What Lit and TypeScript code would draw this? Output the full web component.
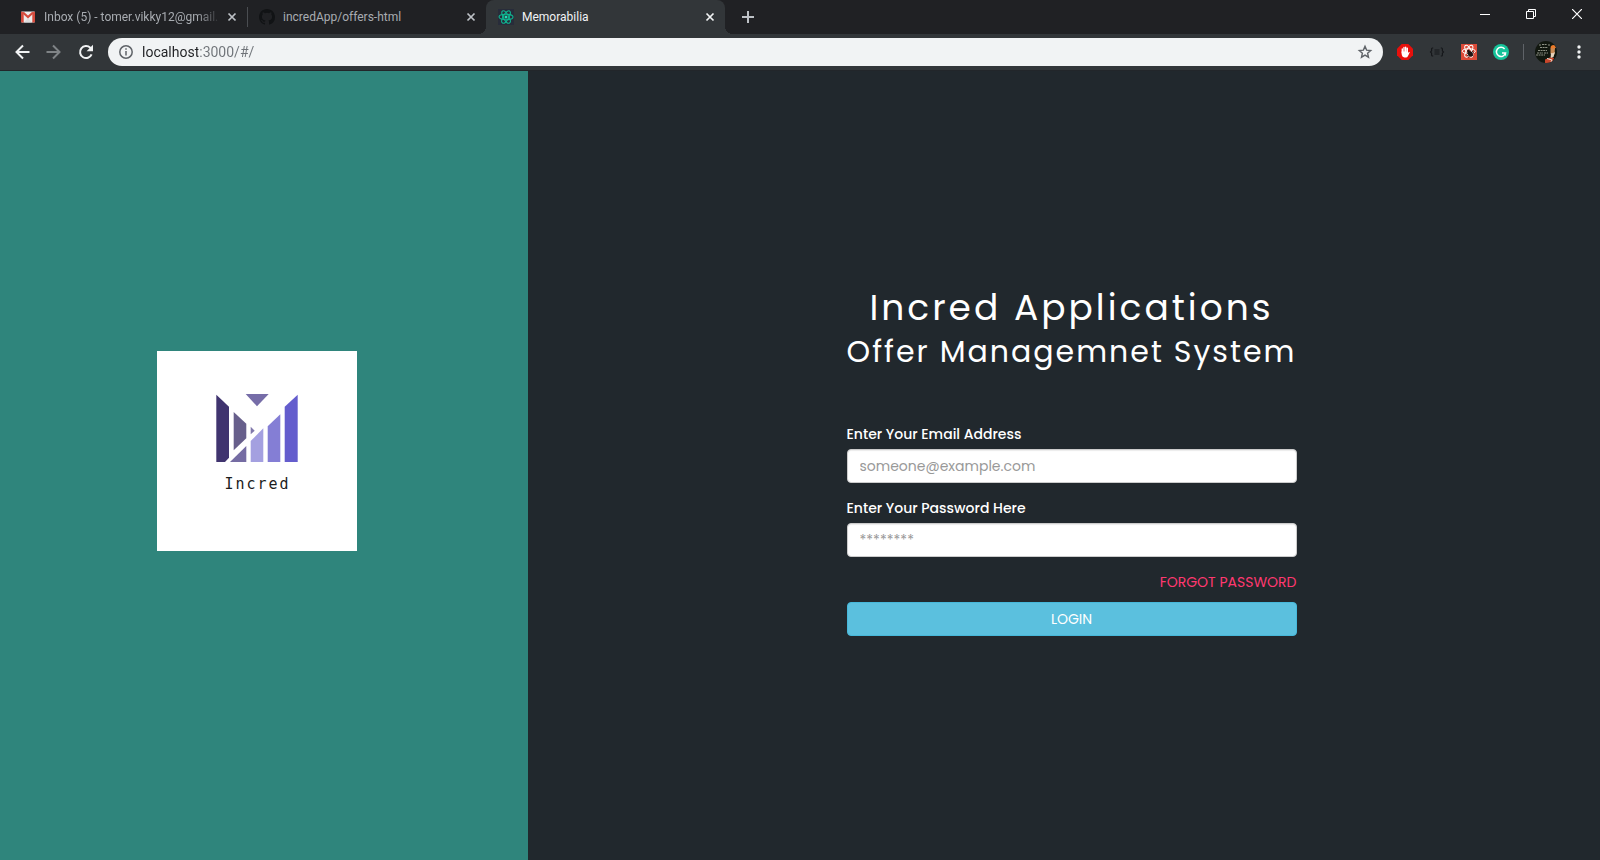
import { LitElement, html, css, svg } from "lit";
import { customElement } from "lit/decorators.js";
import { classMap } from "lit/directives/class-map.js";

const gmailIcon = html`<svg width="16" height="16" viewBox="0 0 16 16" aria-hidden="true">
  <rect x="1" y="2.500" width="14" height="11" rx="1" fill="#eee"/>
  <path d="M4 13.500 8 9l4 4.500z" fill="#ddd"/>
  <path d="M3 3.500 8 8l5-4.500" fill="none" stroke="#d54b3d" stroke-width="2.200"/>
  <path d="M1 3.500a1 1 0 0 1 1-1l1.700 1.500v9.500H2a1 1 0 0 1-1-1zM15 3.500a1 1 0 0 0-1-1L12.300 4v9.500H14a1 1 0 0 0 1-1z" fill="#d54b3d"/>
</svg>`;

const githubIcon = html`<svg width="16" height="16" viewBox="0 0 16 16" aria-hidden="true">
  <path fill="#111315" d="M8 0C3.580 0 0 3.580 0 8c0 3.540 2.290 6.530 5.470 7.590.4.070.55-.17.55-.38 0-.19-.01-.82-.01-1.490-2.010.37-2.530-.49-2.690-.94-.09-.23-.48-.94-.82-1.130-.28-.15-.68-.52-.01-.53.63-.01 1.080.58 1.230.82.72 1.210 1.870.87 2.330.66.07-.52.28-.87.51-1.070-1.780-.2-3.640-.89-3.640-3.950 0-.87.31-1.590.82-2.150-.08-.2-.36-1.020.08-2.120 0 0 .67-.21 2.200.82a7.600 7.600 0 0 1 4 0c1.530-1.040 2.200-.82 2.200-.82.44 1.100.16 1.920.08 2.120.51.56.82 1.270.82 2.150 0 3.070-1.870 3.750-3.650 3.950.29.25.54.73.54 1.480 0 1.070-.01 1.930-.01 2.200 0 .21.15.46.55.38A8.010 8.010 0 0 0 16 8c0-4.420-3.580-8-8-8z"/>
</svg>`;

const reactIcon = html`<svg width="16" height="16" viewBox="0 0 16 16" aria-hidden="true">
  <rect width="16" height="16" fill="#282c3a"/>
  <g fill="none" stroke="#0fb590" stroke-width="1.100">
    <ellipse cx="8" cy="8" rx="7" ry="2.700"/>
    <ellipse cx="8" cy="8" rx="7" ry="2.700" transform="rotate(60 8 8)"/>
    <ellipse cx="8" cy="8" rx="7" ry="2.700" transform="rotate(120 8 8)"/>
  </g>
  <circle cx="8" cy="8" r="1.500" fill="#1fe0b4"/>
</svg>`;

const line = (d: string, size: number, width = 2) => html`<svg
  width=${size} height=${size} viewBox="0 0 ${size} ${size}" aria-hidden="true">
  ${svg`<path d=${d} fill="none" stroke="currentColor" stroke-width=${width}/>`}
</svg>`;

const closeIcon = line("M3.500 3.500l7 7M10.500 3.500l-7 7", 14, 1.7);
const plusIcon = line("M7 1v12M1 7h12", 14, 2);
const backIcon = line("M15.500 8H2.500M9 1.500 2.500 8 9 14.500", 16, 2);
const forwardIcon = line("M.500 8h13M7 1.500 13.500 8 7 14.500", 16, 2);

const reloadIcon = html`<svg width="16" height="16" viewBox="0 0 16 16" aria-hidden="true">
  <path d="M13.600 10.400A6 6 0 1 1 12.300 3.800L14 5.500" fill="none" stroke="currentColor" stroke-width="2"/>
  <path d="M15 .8v6.400H8.600z" fill="currentColor"/>
</svg>`;

const infoIcon = html`<svg width="14" height="14" viewBox="0 0 14 14" aria-hidden="true">
  <circle cx="7" cy="7" r="6.200" fill="none" stroke="#5f6368" stroke-width="1.500"/>
  <path d="M7 6v4.500M7 3.300v1.500" stroke="#5f6368" stroke-width="1.500"/>
</svg>`;

const starIcon = html`<svg width="16" height="16" viewBox="0 0 16 16" aria-hidden="true">
  <path d="M8 2.300l1.600 3.800 4.100.4-3.100 2.700.9 4L8 11.100l-3.500 2.100.9-4-3.100-2.700 4.100-.4z" fill="none" stroke="#5f6368" stroke-width="1.400"/>
</svg>`;

const blockIcon = html`<svg width="16" height="16" viewBox="0 0 16 16" aria-hidden="true">
  <path d="M4.700 0h6.600L16 4.700v6.600L11.300 16H4.700L0 11.300V4.700z" fill="#e8100c"/>
  <path d="M5.300 5v4M7 3.500V9M8.700 3.200V9M10.300 4.200v5" stroke="#fff" stroke-width="1.400" stroke-linecap="round"/>
  <path d="M4.600 7.500H11V9l1-1.300.8.600-1.800 3.700q-.7 1.500-2 1.500H7.400Q5.300 13.300 4.800 11z" fill="#fff"/>
</svg>`;

const jsonIcon = html`<svg width="16" height="16" viewBox="0 0 16 16" aria-hidden="true">
  <path d="M4.200 4H3.400Q2.600 4 2.600 5v1.800L1.500 8l1.100 1.200V11q0 1 .8 1h.8M11.800 4h.8q.8 0 .8 1v1.800L14.500 8l-1.100 1.200V11q0 1-.8 1h-.8M5.500 6h5M5.500 8h5M5.500 10h5" fill="none" stroke="#15171a" stroke-width="1.200"/>
</svg>`;

const reactDevIcon = html`<svg width="16" height="16" viewBox="0 0 16 16" aria-hidden="true">
  <rect width="16" height="16" fill="#dc4a38"/>
  <g fill="none" stroke="#fff" stroke-width="1">
    <ellipse cx="7.800" cy="7.200" rx="6.600" ry="2.500"/>
    <ellipse cx="7.800" cy="7.200" rx="6.600" ry="2.500" transform="rotate(60 7.800 7.200)"/>
    <ellipse cx="7.800" cy="7.200" rx="6.600" ry="2.500" transform="rotate(120 7.800 7.200)"/>
  </g>
  <ellipse cx="9.300" cy="9.800" rx="2.300" ry="3" transform="rotate(-35 9.300 9.800)" fill="#1d1414"/>
  <path d="M5.500 9l7 3M7.500 13.500l4.500-7M6 12l7-3.500" stroke="#1d1414" stroke-width=".8"/>
  <circle cx="7.400" cy="7" r="1.300" fill="#1d1414"/>
</svg>`;

const grammarIcon = html`<svg width="16" height="16" viewBox="0 0 16 16" aria-hidden="true">
  <circle cx="8" cy="8" r="8" fill="#15c39a"/>
  <path d="M11.600 5A4.600 4.600 0 1 0 12.500 9H9" fill="none" stroke="#fff" stroke-width="1.500"/>
  <path d="M12.500 9v2.600" stroke="#fff" stroke-width="1.200"/>
</svg>`;

const avatarIcon = html`<svg width="22" height="22" viewBox="0 0 22 22" aria-hidden="true">
  <defs><clipPath id="face"><circle cx="11" cy="11" r="11"/></clipPath></defs>
  <g clip-path="url(#face)">
    <rect width="22" height="22" fill="#11170f"/>
    <path d="M4 4h2M7 3.500h5M13 4h2M5 6.500h8M3 9.500h9M2 12h6M9 12h4M1 14h9" stroke="#9c9f92" stroke-width=".9" stroke-dasharray="2 .6"/>
    <path d="M15.500 7.500q.5-2.500 3-2.500l1.500 2-.5 6-2.500 2-1.500-2.500z" fill="#c98a55"/>
    <path d="M15.500 6q1.500-3 4.500-1.500l1 2.500-5 .5z" fill="#ec7a2a"/>
    <path d="M16 12q2.500.5 4-1l-1.500 5-3 1.500z" fill="#e6d3bd"/>
    <path d="M10 18.500l5-2 4 .5-2 5h-7z" fill="#c9472c"/>
    <path d="M12 17.500l5 1.500-1 2" fill="none" stroke="#ece5dc" stroke-width="1"/>
  </g>
</svg>`;

const dotsIcon = html`<svg width="16" height="16" viewBox="0 0 16 16" aria-hidden="true">
  <g fill="#f1f3f4"><circle cx="8" cy="3" r="1.700"/><circle cx="8" cy="8" r="1.700"/><circle cx="8" cy="13" r="1.700"/></g>
</svg>`;

const minimizeIcon = line("M0 5.500h10", 10, 1);
const restoreIcon = line("M.500 2.500h7v7h-7zM2.500 2.500v-2h7v7h-2", 10, 1);
const windowCloseIcon = line("M0 0l10 10M10 0 0 10", 10, 1.2);

const extensions = [
  { label: "AdBlock", icon: blockIcon },
  { label: "JSON viewer", icon: jsonIcon },
  { label: "React Developer Tools", icon: reactDevIcon },
  { label: "Grammarly", icon: grammarIcon },
];

const tabs = [
  { title: "Inbox (5) - tomer.vikky12@gmail.", icon: gmailIcon, active: false, divider: true, fade: true },
  { title: "incredApp/offers-html", icon: githubIcon, active: false, divider: false, fade: false },
  { title: "Memorabilia", icon: reactIcon, active: true, divider: false, fade: false },
];

@customElement("browser-chrome")
class BrowserChrome extends LitElement {
  static styles = css`
    :host {
      display: block;
      font-family: "Segoe UI", Roboto, "Noto Sans", sans-serif;
      color: #f1f3f4;
    }
    button {
      display: flex;
      align-items: center;
      justify-content: center;
      margin: 0;
      padding: 0;
      border: 0;
      background: none;
      color: inherit;
      font: inherit;
    }
    svg { display: block; flex: none; }
    .strip {
      display: flex;
      height: 34px;
      padding-left: 8px;
      background: #202124;
    }
    .tab {
      position: relative;
      box-sizing: border-box;
      display: flex;
      align-items: center;
      flex: 0 1 239px;
      min-width: 0;
      padding: 0 8px 0 12px;
      color: #a8acb1;
    }
    .divider::after {
      content: "";
      position: absolute;
      right: -1px;
      top: 7px;
      height: 20px;
      width: 1px;
      background: #4a4d51;
    }
    .active {
      background: #323639;
      border-radius: 8px 8px 0 0;
      color: #f1f3f4;
    }
    .active::before,
    .active::after {
      content: "";
      position: absolute;
      bottom: 0;
      width: 8px;
      height: 8px;
    }
    .active::before {
      left: -8px;
      background: radial-gradient(circle at 0 0, transparent 8px, #323639 8px);
    }
    .active::after {
      right: -8px;
      background: radial-gradient(circle at 100% 0, transparent 8px, #323639 8px);
    }
    .title {
      flex: 1;
      min-width: 0;
      height: 34px;
      margin: 0 4px 0 8px;
      justify-content: flex-start;
      overflow: hidden;
      white-space: nowrap;
      font-size: 12px;
      line-height: 34px;
      text-align: left;
    }
    .fade { mask-image: linear-gradient(to left, transparent, #000 24px); }
    .close { color: #bdc1c6; }
    .active .close { color: #f1f3f4; }
    .new { width: 28px; margin-left: 9px; color: #bdc1c6; }
    .window { display: flex; margin-left: auto; }
    .window button { width: 46px; height: 28px; color: #fff; }
    .toolbar {
      display: flex;
      align-items: center;
      height: 36px;
      padding: 0 13px 0 14px;
      gap: 16px;
      background: #323639;
      border-bottom: 1px solid #22262a;
    }
    .toolbar button { flex: none; }
    .dim { color: #7f8386; }
    .omnibox {
      display: flex;
      align-items: center;
      flex: 1;
      box-sizing: border-box;
      height: 28px;
      margin: 0 -2px 0 -2px;
      padding: 0 10px 0 11px;
      gap: 9px;
      border-radius: 14px;
      background: #f1f3f4;
    }
    .address {
      flex: 1;
      min-width: 0;
      height: 28px;
      padding: 0;
      border: 0;
      outline: 0;
      font: 14px/28px "Segoe UI", Roboto, "Noto Sans", sans-serif;
      color: transparent;
      background: linear-gradient(to right, #202124 56px, #6f7378 56px);
      background-clip: text;
      -webkit-background-clip: text;
    }
    .profile {
      display: flex;
      align-items: center;
      gap: 14px;
      margin-left: -2px;
      padding-left: 11px;
      border-left: 1px solid #5f6368;
      height: 16px;
    }
  `;

  render() {
    return html`
      <div class="strip">
        ${tabs.map((tab) => html`
          <div class=${classMap({ tab: true, active: tab.active, divider: tab.divider })}>
            ${tab.icon}
            <button class=${classMap({ title: true, fade: tab.fade })}>${tab.title}</button>
            <button class="close" aria-label="Close tab">${closeIcon}</button>
          </div>`)}
        <button class="new" aria-label="New tab">${plusIcon}</button>
        <div class="window">
          <button aria-label="Minimize">${minimizeIcon}</button>
          <button aria-label="Restore">${restoreIcon}</button>
          <button aria-label="Close window">${windowCloseIcon}</button>
        </div>
      </div>
      <div class="toolbar">
        <button aria-label="Back">${backIcon}</button>
        <button class="dim" aria-label="Forward">${forwardIcon}</button>
        <button aria-label="Reload">${reloadIcon}</button>
        <div class="omnibox">
          ${infoIcon}
          <input class="address" type="text" aria-label="Address" spellcheck="false" .value=${"localhost:3000/#/"} />
          <button aria-label="Bookmark">${starIcon}</button>
        </div>
        ${extensions.map((e) => html`<button aria-label=${e.label}>${e.icon}</button>`)}
        <div class="profile">
          <button aria-label="Profile">${avatarIcon}</button>
          <button aria-label="Menu">${dotsIcon}</button>
        </div>
      </div>
    `;
  }
}

@customElement("incred-logo")
class IncredLogo extends LitElement {
  static styles = css`
    :host {
      display: flex;
      flex-direction: column;
      align-items: center;
      box-sizing: border-box;
      width: 200px;
      height: 200px;
      padding-top: 42px;
      background: #fff;
    }
    .name {
      margin-top: 11px;
      padding-left: 2px;
      font: 15px/20px "DejaVu Sans Mono", monospace;
      letter-spacing: 2px;
      color: #1c1c1c;
    }
  `;

  render() {
    return html`
      <svg width="84" height="70" viewBox="58 42 84 70" aria-hidden="true">
        <path fill="#40346f" d="M59.300 43.700 72 55.700v51l-4 4.300h-8.700z"/>
        <path fill="#675f8b" d="M76.700 61l12.600 11.700v14.600l-12.600 12z"/>
        <path fill="#756ca3" d="M89.300 95v16H73z"/>
        <path fill="#8078aa" d="M93.700 75.700l4 4-4 3.600z"/>
        <path fill="#a4a0e0" d="M93.700 90l12.600-12.700V111H93.700z"/>
        <path fill="#847ed5" d="M110.700 75.300l12.600-12V111h-12.600z"/>
        <path fill="#645dcd" d="M127.700 55.700l13-12V111h-13z"/>
        <path fill="#766da8" d="M88.700 43h23L100 55.300z"/>
      </svg>
      <div class="name">Incred</div>
    `;
  }
}

@customElement("login-form")
class LoginForm extends LitElement {
  static styles = css`
    :host {
      display: block;
      width: 450px;
      font-family: Poppins, Inter, sans-serif;
      font-size: 14px;
      line-height: 20px;
      color: #fff;
    }
    h1, h2 {
      margin: 0;
      font-weight: 400;
      text-align: center;
      white-space: nowrap;
    }
    h1 { font-size: 36px; line-height: 40px; letter-spacing: 3px; }
    h2 { margin: 7px 0 56px; font-size: 30px; line-height: 33px; letter-spacing: 2px; }
    form { display: flex; flex-direction: column; }
    label { margin-bottom: 5px; font-weight: 500; }
    .field {
      box-sizing: border-box;
      width: 100%;
      height: 34px;
      margin-bottom: 15px;
      padding: 6px 12px;
      border: 1px solid #ccc;
      border-radius: 4px;
      background: #fff;
      box-shadow: inset 0 1px 1px rgba(0, 0, 0, 0.08);
      color: #555;
      font: inherit;
    }
    .field::placeholder { color: #999; opacity: 1; }
    .forgot {
      align-self: flex-end;
      margin-bottom: 10px;
      color: #ff3870;
      text-decoration: none;
    }
    .login {
      height: 34px;
      padding: 6px 12px;
      border: 1px solid #46b8da;
      border-radius: 4px;
      background: #5bc0de;
      color: #fff;
      font: inherit;
    }
  `;

  render() {
    return html`
      <h1>Incred Applications</h1>
      <h2>Offer Managemnet System</h2>
      <form @submit=${(e: Event) => e.preventDefault()}>
        <label for="email">Enter Your Email Address</label>
        <input class="field" id="email" type="email" placeholder="someone@example.com" />
        <label for="password">Enter Your Password Here</label>
        <input class="field" id="password" type="password" placeholder="********" />
        <a class="forgot" href="#/forgot">FORGOT PASSWORD</a>
        <button class="login" type="submit">LOGIN</button>
      </form>
    `;
  }
}

@customElement("app-root")
class AppRoot extends LitElement {
  static styles = css`
    :host {
      display: flex;
      flex-direction: column;
      min-height: 100vh;
    }
    .page {
      flex: 1;
      display: grid;
      grid-template-columns: 33fr 67fr;
      background: #21282d;
    }
    .brand, .entry {
      display: flex;
      align-items: center;
      justify-content: center;
    }
    .brand { padding: 0 15px 30px 0; background: #2f857c; }
    .entry { padding: 0 0 7px 15px; }
  `;

  render() {
    return html`
      <browser-chrome></browser-chrome>
      <main class="page">
        <section class="brand"><incred-logo></incred-logo></section>
        <section class="entry"><login-form></login-form></section>
      </main>
    `;
  }
}
